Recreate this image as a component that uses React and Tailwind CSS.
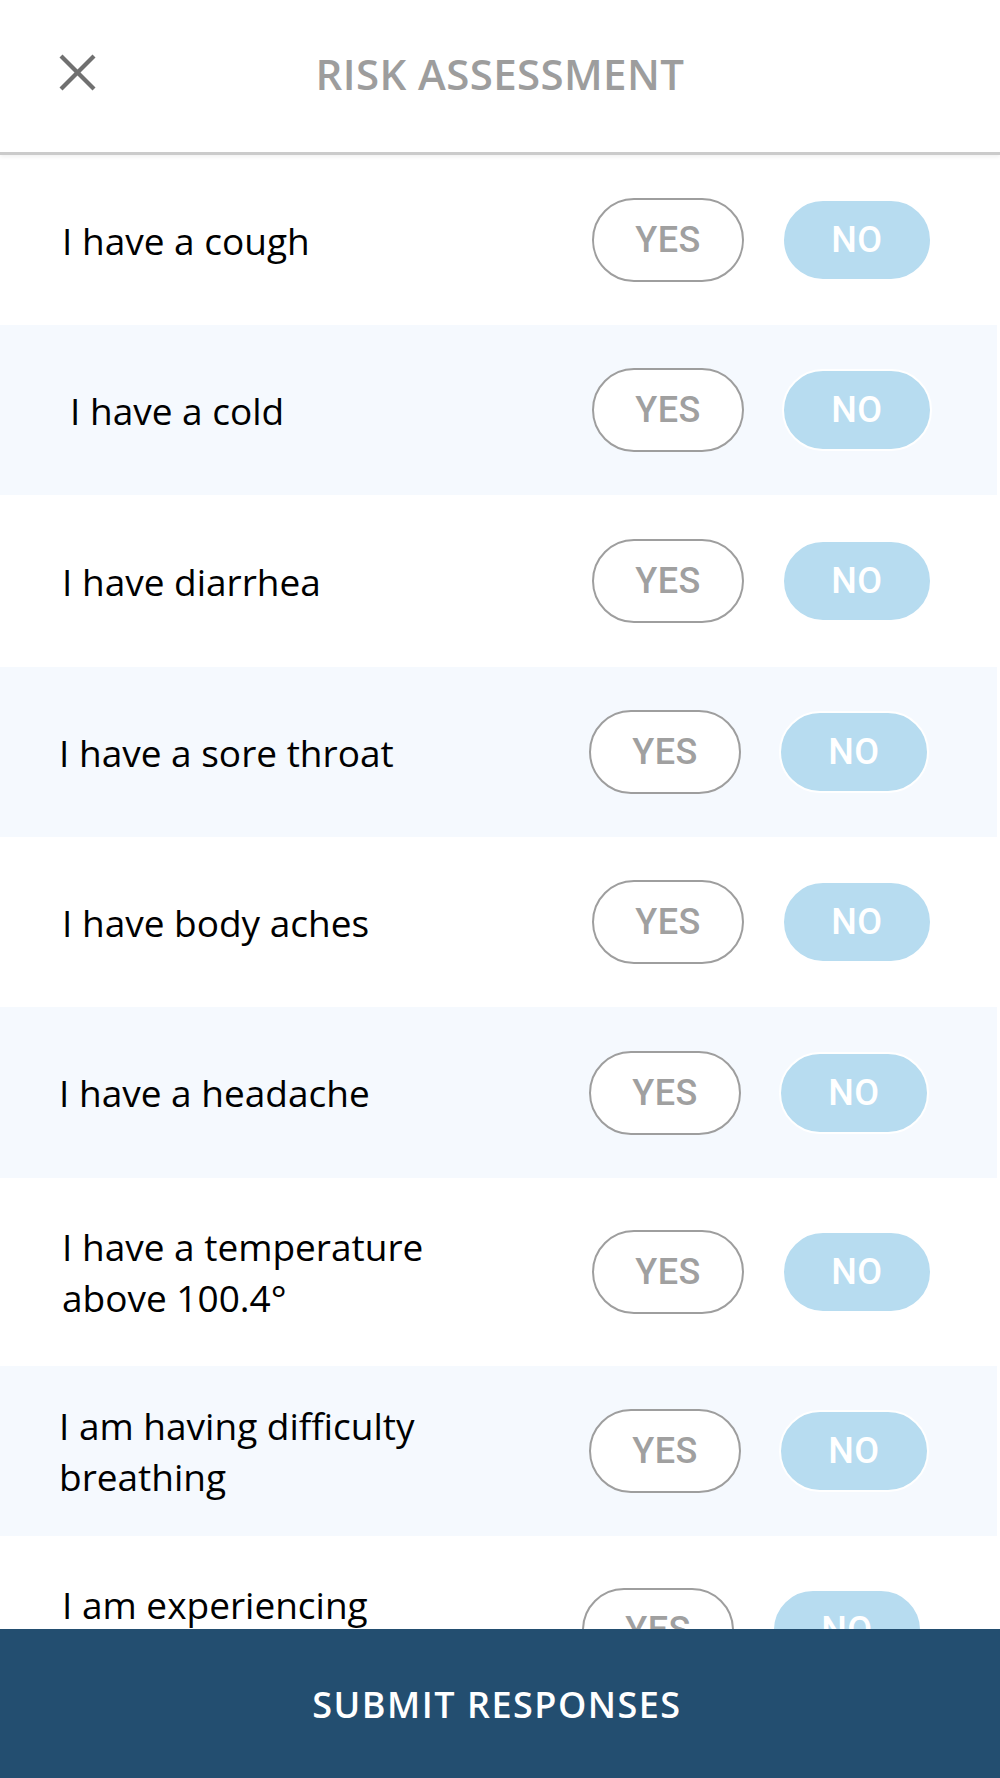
import React from 'react';

// Questions shown in the risk assessment list.
// h / pl / mr keep the small per-row offsets seen in the design.
const QUESTIONS = [
  { lines: ['I have a cough'], h: 'h-[170px]', pl: 'pl-[62px]', mr: 'mr-[65px]', bg: 'bg-white' },
  { lines: ['I have a cold'], h: 'h-[170px]', pl: 'pl-[70px]', mr: 'mr-[65px]', bg: 'bg-[#f5f9fe]' },
  { lines: ['I have diarrhea'], h: 'h-[172px]', pl: 'pl-[62px]', mr: 'mr-[65px]', bg: 'bg-white' },
  { lines: ['I have a sore throat'], h: 'h-[170px]', pl: 'pl-[59px]', mr: 'mr-[68px]', bg: 'bg-[#f5f9fe]' },
  { lines: ['I have body aches'], h: 'h-[170px]', pl: 'pl-[62px]', mr: 'mr-[65px]', bg: 'bg-white' },
  { lines: ['I have a headache'], h: 'h-[171px]', pl: 'pl-[59px]', mr: 'mr-[68px]', bg: 'bg-[#f5f9fe]' },
  { lines: ['I have a temperature', 'above 100.4°'], h: 'h-[188px]', pl: 'pl-[62px]', mr: 'mr-[65px]', bg: 'bg-white' },
  { lines: ['I am having difficulty', 'breathing'], h: 'h-[170px]', pl: 'pl-[59px]', mr: 'mr-[68px]', bg: 'bg-[#f5f9fe]' },
  { lines: ['I am experiencing', 'chills'], h: 'h-[188px]', pl: 'pl-[62px]', mr: 'mr-[75px]', bg: 'bg-white' },
];

const CloseIcon = () => (
  <svg width="37" height="37" viewBox="0 0 37 37" fill="none" stroke="#707070" strokeWidth="4.2" strokeLinecap="butt">
    <line x1="2" y1="2" x2="35" y2="35" />
    <line x1="35" y1="2" x2="2" y2="35" />
  </svg>
);

const QuestionRow = ({ q }) => (
  <div className={`${q.h} ${q.bg} ${q.pl} flex items-center shrink-0`}>
    {/* Question text */}
    <p className="text-[37px] leading-[51px] text-black">
      {q.lines.map((line, i) => (
        <React.Fragment key={i}>
          {i > 0 && <br />}
          {line}
        </React.Fragment>
      ))}
    </p>

    {/* Yes / No toggle */}
    <div className={`ml-auto ${q.mr} flex items-center gap-[38px] font-['Roboto',sans-serif]`}>
      <button className="w-[152px] h-[84px] rounded-full border-2 border-[#9e9e9e] bg-white text-[#a0a0a0] text-[36px] font-medium tracking-[0.5px] flex items-center justify-center">
        YES
      </button>
      <button className="w-[150px] h-[82px] rounded-full border-2 border-white bg-[#b7dcf0] text-white text-[36px] font-medium tracking-[0.5px] flex items-center justify-center">
        NO
      </button>
    </div>
  </div>
);

export default function App() {
  return (
    <div className="w-[1000px] h-[1778px] flex flex-col overflow-hidden bg-white font-['Open_Sans',sans-serif]">
      {/* Header */}
      <header className="h-[155px] shrink-0 flex items-center border-b-[3px] border-[#cbcbcb] shadow-[0_2px_4px_rgba(0,0,0,0.06)] relative z-10 bg-white">
        <div className="w-[97px] pl-[59px] pb-[8px] flex items-center">
          <CloseIcon />
        </div>
        <h1 className="flex-1 text-center text-[42px] font-semibold text-[#9d9d9d] tracking-[0.4px] pb-[5px]">
          RISK ASSESSMENT
        </h1>
        <div className="w-[97px]" />
      </header>

      {/* Questions list */}
      <div className="flex-1 overflow-hidden flex flex-col w-[997px]">
        {QUESTIONS.map((q, i) => (
          <QuestionRow key={i} q={q} />
        ))}
      </div>

      {/* Submit bar */}
      <button className="h-[149px] shrink-0 w-full bg-[#234e70] text-white text-[36px] font-semibold tracking-[1.5px] flex items-center justify-center pr-[6px] pt-[3px]">
        SUBMIT RESPONSES
      </button>
    </div>
  );
}
